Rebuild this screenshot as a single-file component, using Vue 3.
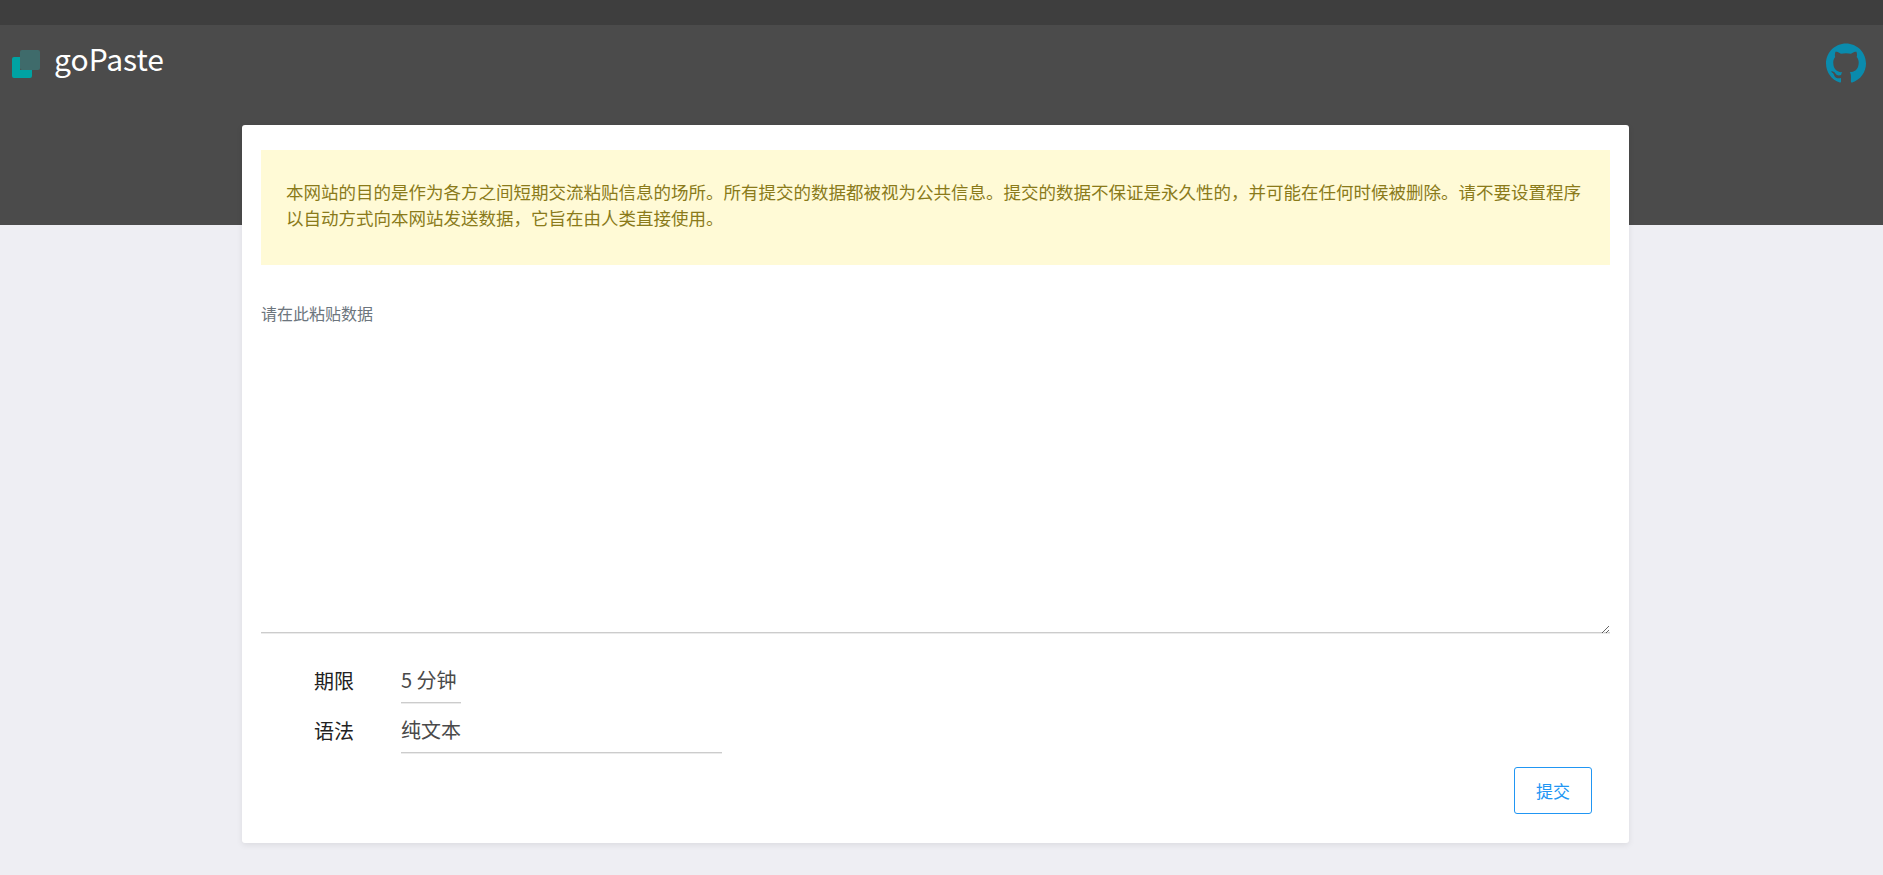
<script setup>
const notice = '本网站的目的是作为各方之间短期交流粘贴信息的场所。所有提交的数据都被视为公共信息。提交的数据不保证是永久性的\uFF0C并可能在任何时候被删除。请不要设置程序以自动方式向本网站发送数据\uFF0C它旨在由人类直接使用。'
</script>

<template>
  <div class="page">
    <div class="topbar"></div>
    <header class="header">
      <div class="brand">
        <svg class="logo" width="30" height="30" viewBox="0 0 30 30">
          <path d="M4 7h6v13h12v6a2 2 0 0 1-2 2H4a2 2 0 0 1-2-2V9a2 2 0 0 1 2-2z" fill="#00a2a2" />
          <rect x="10" y="0" width="20" height="20" rx="2" fill="#3f6b6b" />
        </svg>
        <span class="name">goPaste</span>
      </div>
      <svg class="github" width="40" height="40" viewBox="0 0 24 24">
        <path fill="#0a8bad" d="M12 .297c-6.63 0-12 5.373-12 12 0 5.303 3.438 9.8 8.205 11.385.6.113.82-.258.82-.577 0-.285-.01-1.04-.015-2.04-3.338.724-4.042-1.61-4.042-1.61C4.422 18.07 3.633 17.7 3.633 17.7c-1.087-.744.084-.729.084-.729 1.205.084 1.838 1.236 1.838 1.236 1.07 1.835 2.809 1.305 3.495.998.108-.776.417-1.305.76-1.605-2.665-.3-5.466-1.332-5.466-5.93 0-1.31.465-2.38 1.235-3.22-.135-.303-.54-1.523.105-3.176 0 0 1.005-.322 3.3 1.23.96-.267 1.98-.399 3-.405 1.02.006 2.04.138 3 .405 2.28-1.552 3.285-1.23 3.285-1.23.645 1.653.24 2.873.12 3.176.765.84 1.23 1.91 1.23 3.22 0 4.61-2.805 5.625-5.475 5.92.42.36.81 1.096.81 2.22 0 1.606-.015 2.896-.015 3.286 0 .315.21.69.825.57C20.565 22.092 24 17.592 24 12.297c0-6.627-5.373-12-12-12" />
      </svg>
    </header>
    <main class="card">
      <div class="notice">{{ notice }}</div>
      <textarea class="paste" placeholder="请在此粘贴数据"></textarea>
      <div class="field">
        <label class="label">期限</label>
        <select class="select short"><option>5 分钟</option></select>
      </div>
      <div class="field second">
        <label class="label">语法</label>
        <select class="select long"><option>纯文本</option></select>
      </div>
      <div class="actions">
        <button class="submit" type="button">提交</button>
      </div>
    </main>
  </div>
</template>

<style>
html, body {
  margin: 0;
  background: #eeeef3;
}
</style>

<style scoped>
.page {
  min-height: 875px;
  box-sizing: border-box;
  font-family: "Noto Sans CJK SC", "Noto Sans", sans-serif;
  background: #eeeef3;
  overflow: hidden;
}
.topbar {
  height: 25px;
  background: #3e3e3e;
}
.header {
  height: 200px;
  background: #4b4b4b;
  display: flex;
  justify-content: space-between;
  align-items: flex-start;
  padding: 10px 17px 0 10px;
  box-sizing: border-box;
}
.brand {
  display: flex;
  align-items: flex-start;
}
.logo {
  margin-top: 15px;
  margin-right: 14px;
}
.name {
  color: #fff;
  font-size: 30px;
  line-height: 44px;
  margin-top: 1px;
}
.github {
  margin-top: 8px;
}
.card {
  width: 1387px;
  height: 718px;
  box-sizing: border-box;
  margin: -100px 0 0 242px;
  padding: 25px 19px 0;
  background: #fff;
  border-radius: 3px;
  box-shadow: 0 2px 6px rgba(0, 0, 0, 0.08);
}
.notice {
  box-sizing: border-box;
  height: 115px;
  padding: 29px 25px 0;
  background: #fffad6;
  color: #8a7a1a;
  font-size: 17.5px;
  line-height: 26px;
}
.paste {
  display: block;
  box-sizing: border-box;
  width: 100%;
  height: 354px;
  margin-top: 15px;
  padding: 21px 0 0;
  border: 0;
  box-shadow: inset 0 -1px 0 #ebebeb, inset 0 -2px 0 #cccccc;
  outline: 0;
  font-family: inherit;
  font-size: 16px;
  line-height: 24px;
  color: #363636;
  background: #fff;
}
.paste::placeholder {
  color: #6c757d;
  opacity: 1;
}
.field {
  display: flex;
  align-items: center;
  height: 50px;
  margin-top: 20px;
}
.field.second {
  margin-top: 0;
}
.label {
  width: 140px;
  padding: 2px 0 0 53px;
  box-sizing: border-box;
  font-size: 20px;
  color: #222;
}
.select {
  appearance: none;
  height: 50px;
  padding: 0;
  box-sizing: border-box;
  border: 0;
  box-shadow: inset 0 -1px 0 #ebebeb, inset 0 -2px 0 #cccccc;
  outline: 0;
  background: #fff;
  font-family: inherit;
  font-size: 20px;
  color: #4a4a4a;
}
.short {
  width: 60px;
}
.long {
  width: 321px;
}
.actions {
  display: flex;
  justify-content: flex-end;
  padding: 13px 18px 0 0;
}
.submit {
  width: 78px;
  height: 47px;
  box-sizing: border-box;
  border: 1px solid #2196f3;
  border-radius: 3px;
  background: #fff;
  color: #2196f3;
  font-family: inherit;
  font-size: 17px;
}
</style>
